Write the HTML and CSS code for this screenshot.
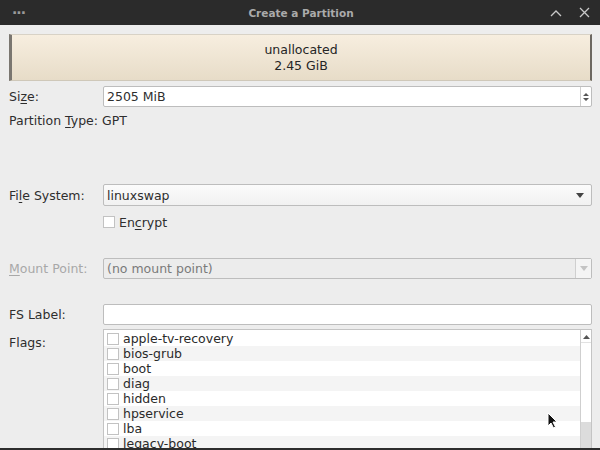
FILE: index.html
```html
<!DOCTYPE html>
<html lang="en">
<head>
  <meta charset="UTF-8" />
  <title>Create a Partition</title>
  <link rel="stylesheet" href="styles.css">
</head>
<body>
  <div class="window">
    <div class="titlebar">
      <span class="tb-menu">···</span>
      <span class="tb-title">Create a Partition</span>
      <span class="tb-buttons">
        <svg width="12" height="8" viewBox="0 0 12 8"><path d="M1 7 L6 2 L11 7" fill="none" stroke="#c8c8c8" stroke-width="1.3"/></svg>
        <svg width="11" height="11" viewBox="0 0 11 11"><path d="M1 1 L10 10 M10 1 L1 10" fill="none" stroke="#c8c8c8" stroke-width="1.3"/></svg>
      </span>
    </div>

    <div class="content">
      <div class="partbar">
        <div>unallocated</div>
        <div>2.45 GiB</div>
      </div>

      <div class="row row-size">
        <label class="lbl">Si<u>z</u>e:</label>
        <div class="field spin">
          <span class="val">2505 MiB</span>
          <span class="spin-btns">
            <svg width="8" height="14" viewBox="0 0 8 14"><path d="M1 6 L4 3 L7 6 Z M1 8 L4 11 L7 8 Z" fill="#555"/></svg>
          </span>
        </div>
      </div>

      <div class="row row-type">
        <span>Partition <u>T</u>ype: GPT</span>
      </div>

      <div class="row row-fs">
        <label class="lbl">Fi<u>l</u>e System:</label>
        <div class="field combo">
          <span class="val">linuxswap</span>
          <svg class="arrow" width="8" height="5" viewBox="0 0 8 5"><path d="M0 0 L8 0 L4 5 Z" fill="#444"/></svg>
        </div>
      </div>

      <div class="row row-encrypt">
        <span class="lbl"></span>
        <span class="check"></span>
        <span>En<u>c</u>rypt</span>
      </div>

      <div class="row row-mount disabled">
        <label class="lbl"><u>M</u>ount Point:</label>
        <div class="field combo-entry">
          <span class="val">(no mount point)</span>
          <span class="drop-btn">
            <svg width="8" height="5" viewBox="0 0 8 5"><path d="M0 0 L8 0 L4 5 Z" fill="#c4c4c4"/></svg>
          </span>
        </div>
      </div>

      <div class="row row-label">
        <label class="lbl">FS Label:</label>
        <div class="field entry"></div>
      </div>

      <div class="row row-flags">
        <label class="lbl">Flags:</label>
        <div class="flag-list">
          <div class="flag-items">
            <div class="flag"><span class="check"></span>apple-tv-recovery</div>
            <div class="flag"><span class="check"></span>bios-grub</div>
            <div class="flag"><span class="check"></span>boot</div>
            <div class="flag"><span class="check"></span>diag</div>
            <div class="flag"><span class="check"></span>hidden</div>
            <div class="flag"><span class="check"></span>hpservice</div>
            <div class="flag"><span class="check"></span>lba</div>
            <div class="flag"><span class="check"></span>legacy-boot</div>
          </div>
          <div class="scrollbar">
            <svg class="up" width="7" height="4" viewBox="0 0 7 4"><path d="M0 4 L3.5 0 L7 4 Z" fill="#555"/></svg>
            <div class="trough"></div>
            <div class="thumb"></div>
          </div>
        </div>
      </div>
    </div>

    <svg class="cursor" width="12" height="18" viewBox="0 0 12 18">
      <path d="M1 1 L1 14 L4 11 L6.5 16 L8.5 15 L6 10 L10 10 Z" fill="#111" stroke="#fff" stroke-width="1"/>
    </svg>
  </div>
</body>
</html>
```

FILE: styles.css
```css
body {
  margin: 0;
  font-family: "DejaVu Sans", sans-serif;
  font-size: 12.5px;
  color: #2e2e2e;
  background-color: #ededed;
}

.window {
  position: relative;
  height: 450px;
  overflow: hidden;
  box-sizing: border-box;
  border-bottom: 2px solid #2d2d2d;
  display: flex;
  flex-direction: column;
}

u {
  text-decoration-thickness: 1px;
  text-underline-offset: 2px;
}

/* title bar */
.titlebar {
  height: 25px;
  flex: none;
  background-color: #2b2b2b;
  display: flex;
  align-items: center;
  justify-content: space-between;
  padding: 0 10px 0 12px;
}

.tb-menu {
  color: #9a9a9a;
  font-size: 14px;
  font-weight: bold;
  width: 60px;
  letter-spacing: -1px;
}

.tb-title {
  color: #aaaaaa;
  font-weight: bold;
  font-size: 10.5px;
}

.tb-buttons {
  width: 60px;
  display: flex;
  justify-content: flex-end;
  align-items: center;
  gap: 17px;
}

/* body */
.content {
  flex: 1;
  min-height: 0;
  display: flex;
  flex-direction: column;
  padding: 9px 8px 0 9px;
}

.partbar {
  height: 44px;
  flex: none;
  border-left: 3px solid #7a7670;
  border-right: 2px solid #6c6862;
  border-top: 1px solid #d8d2c6;
  border-bottom: 1px solid #cfc8b9;
  background: linear-gradient(#f7eedf, #e7dcc8);
  display: flex;
  flex-direction: column;
  align-items: center;
  justify-content: center;
  line-height: 16px;
  padding-top: 1px;
  box-sizing: content-box;
  color: #252525;
}

.row {
  display: flex;
  align-items: center;
  flex: none;
}

.lbl {
  width: 94px;
  flex: none;
}

.field {
  flex: 1;
  box-sizing: border-box;
  display: flex;
  align-items: center;
  border: 1px solid #bdbdbd;
  border-radius: 2px;
  background-color: #fff;
}

.val {
  flex: 1;
  padding-left: 3px;
}

.row-size {
  margin-top: 5px;
}

.spin {
  height: 21px;
}

.spin-btns {
  width: 10px;
  align-self: stretch;
  border-left: 1px solid #cfcfcf;
  display: flex;
  align-items: center;
  justify-content: center;
}

.row-type {
  margin-top: 5px;
  height: 17px;
}

.row-fs {
  margin-top: 55px;
}

.combo {
  height: 22px;
  background: linear-gradient(#fbfbfb, #f1f1f1);
}

.combo .arrow {
  margin-right: 7px;
}

.row-encrypt {
  margin-top: 8px;
  height: 16px;
}

.check {
  width: 10px;
  height: 10px;
  border: 1px solid #c2c2c2;
  background-color: #fff;
  margin-right: 4px;
  flex: none;
}

.row-mount {
  margin-top: 28px;
}

.disabled .lbl {
  color: #a8a8a8;
}

.combo-entry {
  height: 21px;
  background-color: #ececec;
  color: #7a7a7a;
}

.drop-btn {
  width: 15px;
  align-self: stretch;
  border-left: 1px solid #cfcfcf;
  background-color: #f4f4f4;
  display: flex;
  align-items: center;
  justify-content: center;
}

.row-label {
  margin-top: 25px;
}

.entry {
  height: 21px;
}

.row-flags {
  margin-top: 4px;
  flex: 1;
  min-height: 0;
  align-items: stretch;
}

.row-flags .lbl {
  padding-top: 6px;
}

.flag-list {
  flex: 1;
  display: flex;
  border: 1px solid #c4c4c4;
  border-bottom: none;
  background-color: #fff;
}

.flag-items {
  flex: 1;
  padding-top: 1px;
}

.flag {
  height: 15px;
  display: flex;
  align-items: center;
  padding-left: 3px;
  color: #2a2a2a;
}

.flag:nth-child(even) {
  background-color: #f4f4f4;
}

.flag .check {
  margin-right: 4px;
}

.scrollbar {
  width: 10px;
  border-left: 1px solid #cfcfcf;
  display: flex;
  flex-direction: column;
  align-items: center;
}

.scrollbar .up {
  margin: 5px 0 3px;
}

.trough {
  flex: none;
  height: 79px;
  width: 100%;
  border-top: 1px solid #e2e2e2;
}

.thumb {
  flex: 1;
  width: 100%;
  background-color: #dcdcdc;
}

.cursor {
  position: absolute;
  left: 547px;
  top: 412px;
}
```
